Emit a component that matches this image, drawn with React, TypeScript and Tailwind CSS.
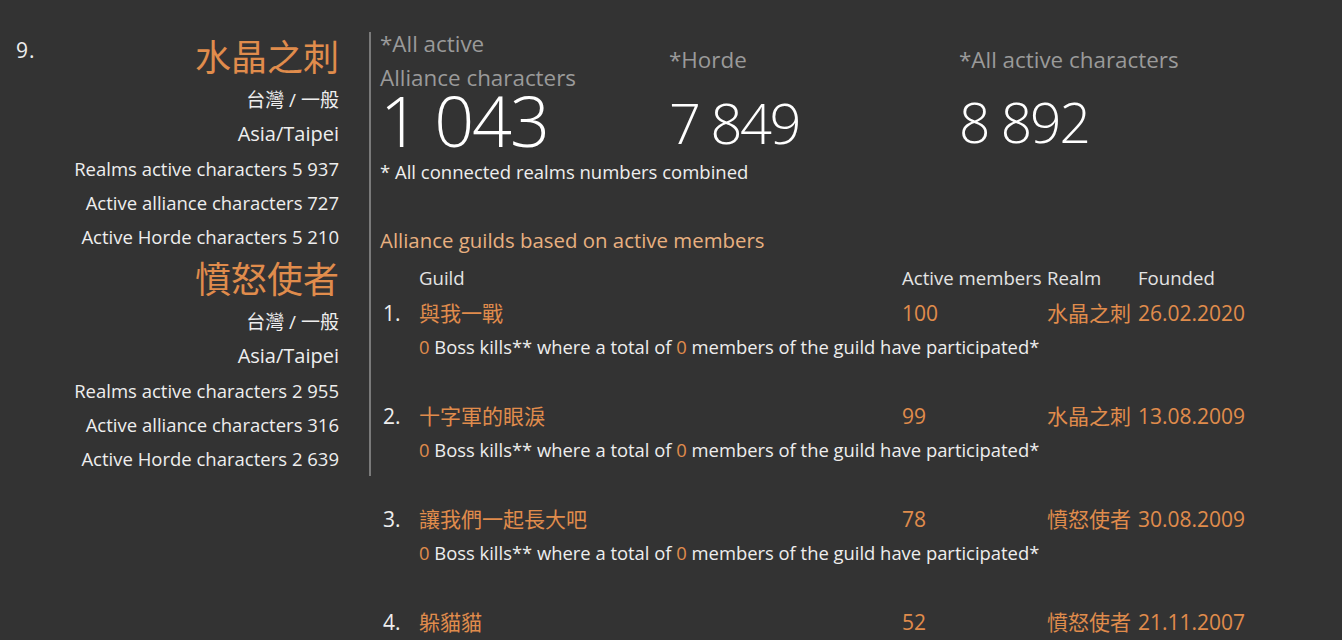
import React from "react";

const orange = "text-[#e08c4c]";

function RealmBlock({ name, pop, total, ally, horde }: { name: string; pop: string; total: string; ally: string; horde: string }) {
  return (
    <div className="flex flex-col items-end whitespace-nowrap">
      <div className={`text-[36px] leading-[52px] ${orange}`}>{name}</div>
      <div className="text-[19px] leading-[32px]">{pop}</div>
      <div className="text-[20px] leading-[36px]">Asia/Taipei</div>
      <div className="text-[18.5px] leading-[34px]">Realms active characters {total}</div>
      <div className="text-[18.5px] leading-[34px]">Active alliance characters {ally}</div>
      <div className="text-[18.5px] leading-[34px]">Active Horde characters {horde}</div>
    </div>
  );
}

const guilds = [
  { n: "1.", name: "與我一戰", members: "100", realm: "水晶之刺", date: "26.02.2020" },
  { n: "2.", name: "十字軍的眼淚", members: "99", realm: "水晶之刺", date: "13.08.2009" },
  { n: "3.", name: "讓我們一起長大吧", members: "78", realm: "憤怒使者", date: "30.08.2009" },
  { n: "4.", name: "躲貓貓", members: "52", realm: "憤怒使者", date: "21.11.2007" },
];

export default function App() {
  return (
    <div
      className="h-[640px] overflow-hidden bg-[#333333] text-[#eeeeee] flex pl-4 pt-[32px]"
      style={{ fontFamily: "'Open Sans', 'Noto Sans CJK TC', sans-serif" }}
    >
      <div className="w-[355px] shrink-0 self-start flex justify-between border-r-2 border-[#7a7a7a] pr-[30px]">
        <div className="text-[21px] leading-[34px] mt-[1px] tracking-[1px]">9.</div>
        <div className="flex flex-col">
          <RealmBlock name="水晶之刺" pop="台灣 / 一般" total="5 937" ally="727" horde="5 210" />
          <RealmBlock name="憤怒使者" pop="台灣 / 一般" total="2 955" ally="316" horde="2 639" />
        </div>
      </div>
      <div className="flex-1 pl-[9px] -mt-[5px]">
        <div className="flex items-start">
          <div className="w-[289px] shrink-0">
            <div className="text-[22.4px] leading-[34px] text-[#9a9a9a] whitespace-nowrap">*All active<br />Alliance characters</div>
            <div className="text-[70px] leading-[46px] font-light text-white whitespace-nowrap mt-[2px] tracking-[-2px]">1 043</div>
          </div>
          <div className="w-[290px] shrink-0 pt-[16px]">
            <div className="text-[22.4px] leading-[34px] text-[#9a9a9a]">*Horde</div>
            <div className="text-[56px] leading-[50px] font-light text-white mt-[20px] whitespace-nowrap tracking-[-2.5px]">7 849</div>
          </div>
          <div className="pt-[16px]">
            <div className="text-[22.4px] leading-[34px] text-[#9a9a9a] whitespace-nowrap">*All active characters</div>
            <div className="text-[55px] leading-[50px] font-light text-white mt-[20px] whitespace-nowrap tracking-[-2px]">8 892</div>
          </div>
        </div>
        <div className="text-[18.5px] leading-[28px] mt-[11px] whitespace-nowrap">* All connected realms numbers combined</div>
        <div className="text-[20.4px] leading-[34px] text-[#e8b080] mt-[37px] whitespace-nowrap">Alliance guilds based on active members</div>
        <div className="flex text-[18.6px] leading-[36px] text-[#e4e4e4] mt-[3px] whitespace-nowrap">
          <div className="w-[39px] shrink-0" />
          <div className="w-[483px] shrink-0">Guild</div>
          <div className="w-[145px] shrink-0">Active members</div>
          <div className="w-[91px] shrink-0">Realm</div>
          <div>Founded</div>
        </div>
        <div className="flex flex-col">
          {guilds.map((g) => (
            <div key={g.n} className="h-[103px] shrink-0">
              <div className={`flex text-[21px] leading-[34px] whitespace-nowrap ${orange}`}>
                <div className="w-[39px] shrink-0 pl-[3px] text-[#eeeeee]">{g.n}</div>
                <div className="w-[483px] shrink-0">{g.name}</div>
                <div className="w-[145px] shrink-0">{g.members}</div>
                <div className="w-[91px] shrink-0">{g.realm}</div>
                <div>{g.date}</div>
              </div>
              <div className="text-[18.4px] leading-[34px] pl-[39px] whitespace-nowrap">
                <span className={orange}>0</span> Boss kills** where a total of <span className={orange}>0</span> members of the guild have participated*
              </div>
            </div>
          ))}
        </div>
      </div>
    </div>
  );
}
